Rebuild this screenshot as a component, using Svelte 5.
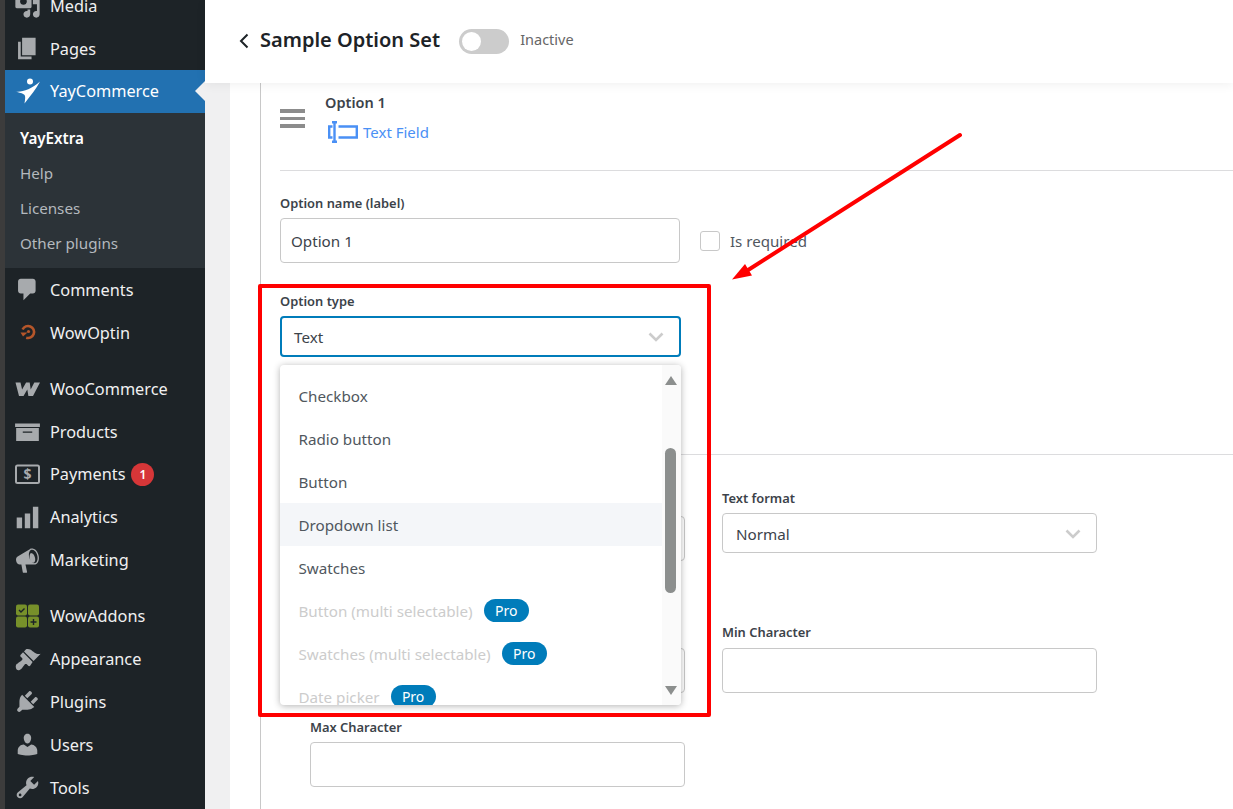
<script lang="ts">
	// dashicons-style paths, 20 unit box
	const paths = {
		media: 'M13 11V4c0-.55-.45-1-1-1h-1.67L9 1H5L3.67 3H2c-.55 0-1 .45-1 1v7c0 .55.45 1 1 1h10c.55 0 1-.45 1-1zM7 4.5c1.38 0 2.5 1.12 2.5 2.5S8.38 9.5 7 9.5 4.5 8.38 4.5 7 5.62 4.5 7 4.5zM14 6h5v10.5c0 1.38-1.12 2.5-2.5 2.5S14 17.88 14 16.5s1.12-2.5 2.5-2.5c.17 0 .34.02.5.05V9h-3V6zm-4 8.05V13h2v3.5c0 1.38-1.12 2.5-2.5 2.5S7 17.88 7 16.5 8.12 14 9.5 14c.17 0 .34.02.5.05z',
		pages: 'M6 15V2h10v13H6zm-1 1h8v2H3V5h2v11z',
		comments: 'M5 2h9c1.1 0 2 .9 2 2v7c0 1.1-.9 2-2 2h-2l-5 5v-5H5c-1.1 0-2-.9-2-2V4c0-1.1.9-2 2-2z',
		products: 'M.8 4h18.4v2.6H.8V4zM1.6 7.4h16.8V17H1.6V7.4zM6.5 10v1h7v-1h-7z',
		analytics: 'M18 18V2h-4v16h4zm-6 0V7H8v11h4zm-6 0v-8H2v8h4z',
		marketing: 'M18.15 5.94c.46 1.62.38 3.22-.02 4.48-.42 1.28-1.26 2.18-2.3 2.48-.16.06-.26.06-.4.06-.06.02-.12.02-.18.02-.06.02-.14.02-.22.02H8.5l1.2 5.5c.02.14-.06.26-.14.34-.08.1-.24.16-.34.16H6.95c-.1 0-.26-.06-.34-.16-.08-.08-.16-.2-.14-.34l-1-5.5H4.25c-.5.06-1.08-.18-1.54-.62s-.88-1.08-1.06-1.88c-.24-.8-.2-1.56-.02-2.2.18-.62.58-1.08 1.06-1.3l9-5.42c.1-.06.18-.1.24-.16.06-.04.14-.08.24-.12.16-.08.28-.12.5-.18 1.04-.3 2.24.1 3.22.98.98.84 1.82 2.24 2.26 3.86zm-2.58 5.98c.4-.1.74-.34 1.04-.7.58-.7.86-1.76.86-3.04-.02-.64-.1-1.3-.28-1.98-.34-1.36-1.02-2.5-1.78-3.24s-1.68-1.1-2.46-.88c-.82.22-1.4.96-1.7 2-.32 1.04-.28 2.36.06 3.72.38 1.36 1 2.5 1.8 3.24.78.74 1.62 1.1 2.48.88zm-2.54-7.08c.22-.04.42-.02.62.04.38.16.76.48 1.1 1s.58 1.14.76 1.84c.18.68.24 1.36.2 1.94-.04.6-.2 1.08-.48 1.42-.2.26-.44.42-.72.5-.3.08-.6.06-.88-.06-.48-.2-.92-.64-1.26-1.3-.36-.64-.6-1.4-.74-2.26-.14-.84-.12-1.6.08-2.24.2-.64.52-1.04.96-1.2.12-.02.24-.06.36-.08z',
		appearance: 'M14.48 11.06L7.41 3.99l1.5-1.5c.5-.56 2.3-.47 3.51.32 1.21.8 1.43 1.28 2.91 2.1 1.18.64 2.45 1.26 4.45.85zm-.71.71L6.7 4.7 4.93 6.47c-.39.39-.39 1.02 0 1.41l1.06 1.06c.39.39.39 1.03 0 1.42-.6.6-1.43 1.11-2.21 1.69-.35.26-.7.53-1.01.84C1.43 13.23.99 14.75 1.5 16.5c.8 2.38 3 1.36 4.04.3.31-.31.59-.66.85-1.01.58-.78 1.09-1.61 1.69-2.21.39-.39 1.02-.39 1.41 0l1.06 1.06c.39.39 1.02.39 1.41 0z',
		plugins: 'M13.11 4.36L9.87 7.6 8 5.73l3.24-3.24c.35-.34 1.05-.2 1.56.32.52.51.66 1.21.31 1.55zm-8 1.77l.91-1.12 9.01 9.01-1.19.84c-.71.71-2.63 1.16-3.82 1.16H6.14L4.9 17.26c-.59.59-1.54.59-2.12 0-.59-.58-.59-1.53 0-2.12l1.24-1.24v-3.88c0-1.13.4-3.19 1.09-3.89zm7.26 3.97l3.24-3.24c.34-.35 1.04-.21 1.55.31.52.51.66 1.21.31 1.55l-3.24 3.25z',
		users: 'M10 9.25c-2.27 0-2.73-3.44-2.73-3.44C7 4.02 7.82 2 9.97 2c2.16 0 2.98 2.02 2.71 3.81 0 0-.41 3.44-2.68 3.44zm0 2.57L12.72 10c2.39 0 4.52 2.33 4.52 4.53v2.49s-3.65 1.13-7.24 1.13c-3.65 0-7.24-1.13-7.24-1.13v-2.49c0-2.25 1.94-4.48 4.47-4.48z',
		tools: 'M16.68 9.77c-1.34 1.34-3.3 1.67-4.95.99l-5.41 6.52c-.99.99-2.59.99-3.58 0s-.99-2.59 0-3.57l6.52-5.42c-.68-1.65-.35-3.61.99-4.95 1.28-1.28 3.12-1.62 4.72-1.06l-2.89 2.89 2.82 2.82 2.86-2.87c.53 1.58.18 3.39-1.08 4.65zM3.81 16.21c.4.39 1.04.39 1.43 0 .4-.4.4-1.04 0-1.43-.39-.4-1.03-.4-1.43 0-.39.39-.39 1.03 0 1.43z'
	};

	const menuTop = [
		{ name: 'Media', icon: 'media' },
		{ name: 'Pages', icon: 'pages' }
	];
	const groups = [
		[
			{ name: 'Comments', icon: 'comments' },
			{ name: 'WowOptin', icon: 'wowoptin' }
		],
		[
			{ name: 'WooCommerce', icon: 'woo' },
			{ name: 'Products', icon: 'products' },
			{ name: 'Payments', icon: 'payments', badge: 1 },
			{ name: 'Analytics', icon: 'analytics' },
			{ name: 'Marketing', icon: 'marketing' }
		],
		[
			{ name: 'WowAddons', icon: 'addons' },
			{ name: 'Appearance', icon: 'appearance' },
			{ name: 'Plugins', icon: 'plugins' },
			{ name: 'Users', icon: 'users' },
			{ name: 'Tools', icon: 'tools' }
		]
	];
	const submenu = ['YayExtra', 'Help', 'Licenses', 'Other plugins'];

	const optionTypes = [
		{ label: 'Checkbox' },
		{ label: 'Radio button' },
		{ label: 'Button' },
		{ label: 'Dropdown list', hover: true },
		{ label: 'Swatches' },
		{ label: 'Button (multi selectable)', pro: true },
		{ label: 'Swatches (multi selectable)', pro: true },
		{ label: 'Date picker', pro: true }
	];
</script>

{#snippet menuItem(item)}
	<a class="menu-item" href="#top">
		{#if item.icon === 'woo'}
			<svg class="icon" viewBox="0 0 27 27">
				<path d="M1.5 7.5h5l1.6 7 4-7h3.6l1 7 3.6-7h5.7l-7 13.5h-4.6l-1.1-6.5-3.8 6.5H5z" fill="#a7aaad" />
			</svg>
		{:else if item.icon === 'wowoptin'}
			<svg class="icon" viewBox="0 0 27 27">
				<path d="M8.6 10.5a6 6 0 1 1 3.6 8.2" fill="none" stroke="#b5562a" stroke-width="2.6" />
				<path d="M6.5 13.5h7l-4.5 4z" fill="#b5562a" />
				<circle cx="14.5" cy="12.5" r="1.6" fill="#b5562a" />
			</svg>
		{:else if item.icon === 'payments'}
			<svg class="icon" viewBox="0 0 27 27">
				<rect x="2" y="4.5" width="23" height="17.5" rx="1.5" fill="none" stroke="#a7aaad" stroke-width="2" />
				<text x="13.5" y="18" text-anchor="middle" class="dollar">$</text>
			</svg>
		{:else if item.icon === 'addons'}
			<svg class="icon" viewBox="0 0 27 27">
				<rect x="2" y="1.5" width="11" height="11" rx="2" fill="#77902a" />
				<rect x="14" y="1.5" width="11" height="11" rx="2" fill="#77902a" />
				<rect x="2" y="13.5" width="11" height="11" rx="2" fill="#77902a" />
				<rect x="14" y="13.5" width="11" height="11" rx="2" fill="#77902a" />
				<path d="M5 7l2 2 3.5-3.5" fill="none" stroke="#1d2327" stroke-width="1.4" />
				<path d="M19.5 16v6M16.5 19h6" stroke="#1d2327" stroke-width="1.4" />
			</svg>
		{:else}
			<svg class="icon" viewBox="0 0 20 20"><path d={paths[item.icon]} fill="#a7aaad" /></svg>
		{/if}
		<span>{item.name}</span>
		{#if item.badge}<b class="count">{item.badge}</b>{/if}
	</a>
{/snippet}

{#snippet chevron()}
	<svg class="chevron" viewBox="0 0 16 10">
		<path d="M1.5 1.5L8 8l6.5-6.5" fill="none" stroke="#cccccc" stroke-width="2.6" />
	</svg>
{/snippet}

<div class="app" id="top">
	<aside class="sidebar">
		<nav class="menu">
			{#each menuTop as item}
				{@render menuItem(item)}
			{/each}
			<a class="menu-item active" href="#top">
				<svg class="icon" viewBox="0 0 27 27">
					<circle cx="16" cy="3.4" r="3" fill="#fff" />
					<path d="M1 13.5C8 14.5 17 11.5 26 3.5 22 11 17 17 10.5 25.5 11.5 20 11.5 17.5 10 16.5 7 14.5 4 14.5 1 13.5z" fill="#fff" />
				</svg>
				<span>YayCommerce</span>
			</a>
			<ul class="submenu">
				{#each submenu as sub, i}
					<li class:current={i === 0}>{sub}</li>
				{/each}
			</ul>
			{#each groups as group}
				<div class="menu-group">
					{#each group as item}
						{@render menuItem(item)}
					{/each}
				</div>
			{/each}
		</nav>
	</aside>

	<main class="main">
		<header class="topbar">
			<svg class="back" viewBox="0 0 10 16">
				<path d="M8.5 1.5L2 8l6.5 6.5" fill="none" stroke="#1d2327" stroke-width="2" />
			</svg>
			<h1>Sample Option Set</h1>
			<span class="toggle"><i></i></span>
			<span class="toggle-label">Inactive</span>
		</header>

		<div class="page">
			<div class="panel">
				<section class="card">
					<div class="option-head">
						<div class="burger"><i></i><i></i><i></i></div>
						<div class="option-title">
							<strong>Option 1</strong>
							<div class="option-kind">
								<svg viewBox="0 0 30 22" class="field-icon">
									<path d="M4 1.2h5M4 20.8h5M6.5 1.2v19.6M4.5 5.5H1.2v11h3.3M10.5 5.5h18.3v11H10.5" fill="none" stroke="#4a90f5" stroke-width="2.4" />
								</svg>
								<span>Text Field</span>
							</div>
						</div>
					</div>

					<div class="name-row">
						<div class="field">
							<span class="label">Option name (label)</span>
							<div class="input">Option 1</div>
						</div>
						<label class="required"><i></i><span>Is required</span></label>
					</div>

					<div class="type-field">
						<span class="label">Option type</span>
						<div class="select focus">Text {@render chevron()}</div>
						<div class="dropdown">
							<ul>
								{#each optionTypes as opt}
									<li class:hover={opt.hover} class:disabled={opt.pro}>
										<span>{opt.label}</span>
										{#if opt.pro}<em>Pro</em>{/if}
									</li>
								{/each}
							</ul>
							<div class="scroll">
								<i class="up"></i>
								<i class="thumb"></i>
								<i class="down"></i>
							</div>
						</div>
					</div>

					<div class="settings">
						<div class="col left">
							<div class="input"></div>
							<div class="input second"></div>
							<span class="label max">Max Character</span>
							<div class="input"></div>
						</div>
						<div class="col right">
							<span class="label">Text format</span>
							<div class="select">Normal {@render chevron()}</div>
							<span class="label min">Min Character</span>
							<div class="input"></div>
						</div>
					</div>
				</section>
			</div>
		</div>
	</main>

	<!-- red annotation drawn over the screenshot -->
	<div class="mark-box"></div>
	<svg class="mark-arrow" viewBox="0 0 1233 809">
		<path d="M960 135L745 272" stroke="#ff0000" stroke-width="4" stroke-linecap="round" fill="none" />
		<path d="M732 279.5L745 264 752 275.5z" fill="#ff0000" />
	</svg>
</div>

<style>
	:global(body) {
		margin: 0;
		background: #ffffff;
	}

	.app {
		position: relative;
		display: flex;
		height: 809px;
		overflow: hidden;
		font-family: 'Noto Sans', 'Open Sans', sans-serif;
		color: #3c434a;
	}

	/* wp admin menu */
	.sidebar {
		width: 200px;
		flex: none;
		background: #1d2327;
		border-left: 5px solid #3c3c3c;
	}

	.menu {
		margin-top: -15.6px;
	}

	.menu-item {
		display: flex;
		align-items: center;
		height: 42.8px;
		padding-left: 9px;
		box-sizing: border-box;
		color: #f0f0f1;
		font-size: 16.3px;
		text-decoration: none;
		position: relative;
	}

	.menu-item > span {
		margin-left: 9px;
	}

	.icon {
		width: 27px;
		height: 27px;
		flex: none;
	}

	.dollar {
		font-family: 'Noto Sans', sans-serif;
		font-size: 14px;
		font-weight: 700;
		fill: #a7aaad;
	}

	.active {
		background: #2271b1;
		color: #ffffff;
	}

	.active::after {
		content: '';
		position: absolute;
		right: 0;
		top: 50%;
		margin-top: -10px;
		border: 10px solid transparent;
		border-left-width: 0;
		border-right-color: #f0f0f1;
	}

	.count {
		margin-left: 6px;
		width: 23px;
		height: 23px;
		border-radius: 50%;
		background: #d63638;
		color: #ffffff;
		font-size: 12px;
		font-weight: 600;
		text-align: center;
		line-height: 23px;
	}

	.submenu {
		list-style: none;
		margin: 0;
		padding: 8.5px 0 7.1px 15px;
		background: #2c3338;
		color: #b4b9be;
		font-size: 15.2px;
	}

	.submenu li {
		height: 35px;
		line-height: 35px;
	}

	.submenu .current {
		color: #ffffff;
		font-weight: 600;
	}

	.menu-group + .menu-group {
		margin-top: 13.5px;
	}

	/* main area */
	.main {
		flex: 1;
		min-width: 0;
		display: flex;
		flex-direction: column;
		background: #f0f0f1;
	}

	.topbar {
		position: relative;
		z-index: 1;
		height: 83px;
		flex: none;
		box-sizing: border-box;
		display: flex;
		align-items: center;
		padding-left: 34px;
		background: #ffffff;
		box-shadow: 0 2px 10px rgba(0, 0, 0, 0.06);
	}

	.back {
		width: 10px;
		height: 16px;
		margin-bottom: 2px;
	}

	h1 {
		margin: 0 0 4px 11px;
		font-size: 20px;
		font-weight: 600;
		color: #1d2327;
	}

	.toggle {
		margin-left: 19px;
		width: 50px;
		height: 25px;
		border-radius: 13px;
		background: #cccccc;
		position: relative;
	}

	.toggle i {
		position: absolute;
		left: 3px;
		top: 3px;
		width: 19px;
		height: 19px;
		border-radius: 50%;
		background: #ffffff;
	}

	.toggle-label {
		margin: 0 0 6px 11px;
		font-size: 14.5px;
		color: #666666;
	}

	.page {
		flex: 1;
		padding-left: 25px;
		min-height: 0;
	}

	.panel {
		height: 100%;
		padding-left: 30px;
		background: #ffffff;
	}

	.card {
		height: 100%;
		padding-left: 19px;
		border-left: 1px solid #c8c8c8;
	}

	.option-head {
		display: flex;
		height: 88px;
		box-sizing: border-box;
		border-bottom: 1px solid #dcdcde;
	}

	.burger {
		width: 25px;
		margin-top: 26px;
		display: flex;
		flex-direction: column;
		gap: 4px;
	}

	.burger i {
		height: 3.7px;
		background: #8c8c8c;
	}

	.option-title {
		margin-left: 20px;
		padding-top: 10px;
	}

	.option-title strong {
		display: block;
		font-size: 14.5px;
		font-weight: 600;
		line-height: 19px;
		color: #3c434a;
	}

	.option-kind {
		display: flex;
		align-items: center;
		margin: 9px 0 0 3px;
		font-size: 15px;
		color: #4a90f5;
	}

	.field-icon {
		width: 30px;
		height: 22px;
		margin-right: 5px;
	}

	.label {
		display: block;
		font-size: 12.9px;
		font-weight: 600;
		line-height: 16px;
		color: #3c434a;
	}

	.name-row {
		display: flex;
		align-items: flex-end;
		padding-top: 24px;
	}

	.name-row .field {
		width: 400px;
	}

	.input,
	.select {
		box-sizing: border-box;
		height: 45px;
		border: 1px solid #c8c8c8;
		border-radius: 4px;
		background: #ffffff;
		font-size: 15.2px;
		color: #3c434a;
		display: flex;
		align-items: center;
		padding-left: 10px;
	}

	.name-row .input {
		margin-top: 7px;
	}

	.required {
		display: flex;
		align-items: center;
		margin: 0 0 12px 20px;
		font-size: 15.1px;
		color: #50575e;
	}

	.required i {
		width: 20px;
		height: 20px;
		box-sizing: border-box;
		border: 1px solid #c8c8c8;
		border-radius: 3px;
		margin-right: 10px;
	}

	.type-field {
		position: relative;
		width: 401px;
		margin-top: 30px;
		height: 161px;
	}

	.type-field .label {
		margin-bottom: 7px;
	}

	.select {
		justify-content: space-between;
		padding: 0 15px 0 13px;
		height: 40px;
	}

	.select.focus {
		height: 41px;
		border: 2px solid #007cba;
		padding-left: 12px;
	}

	.right .select {
		padding-top: 1px;
	}

	.chevron {
		width: 16px;
		height: 10px;
	}

	.dropdown {
		position: absolute;
		left: 0;
		top: 72px;
		z-index: 3;
		width: 401px;
		height: 340px;
		box-sizing: border-box;
		display: flex;
		overflow: hidden;
		background: #ffffff;
		border-radius: 4px;
		box-shadow: 0 1px 7px rgba(0, 0, 0, 0.3);
	}

	.dropdown ul {
		flex: 1;
		list-style: none;
		margin: 0;
		padding: 9px 0 0;
		font-size: 15.2px;
		color: #50575e;
	}

	.dropdown li {
		height: 43px;
		display: flex;
		align-items: center;
		padding-left: 18.5px;
	}

	.dropdown .hover {
		background: #f4f6f9;
	}

	.dropdown .disabled {
		color: #cccccc;
	}

	.dropdown em {
		margin-left: 11px;
		width: 45px;
		height: 23px;
		border-radius: 12px;
		background: #007cba;
		color: #ffffff;
		font-style: normal;
		font-size: 14px;
		line-height: 23px;
		text-align: center;
	}

	.scroll {
		position: relative;
		width: 19px;
		flex: none;
		background: #fafafa;
	}

	.scroll .thumb {
		position: absolute;
		left: 3px;
		top: 83px;
		width: 11px;
		height: 145px;
		border-radius: 6px;
		background: #8c8f8e;
	}

	.scroll .up,
	.scroll .down {
		position: absolute;
		left: 3px;
		border-left: 6.5px solid transparent;
		border-right: 6.5px solid transparent;
	}

	.scroll .up {
		top: 11px;
		border-bottom: 9px solid #8c8f8e;
	}

	.scroll .down {
		bottom: 10px;
		border-top: 9px solid #8c8f8e;
	}

	.settings {
		display: flex;
		gap: 37px;
		margin-right: -200px;
		padding-left: 30px;
		border-top: 1px solid #dcdcde;
	}

	.col {
		width: 375px;
		flex: none;
	}

	.left {
		padding-top: 61px;
	}

	.left .second {
		margin-top: 87px;
	}

	.left .max {
		margin: 26px 0 7px;
	}

	.right {
		padding-top: 35px;
	}

	.right > .label:first-child {
		margin-bottom: 7px;
	}

	.right .min {
		margin: 71px 0 8px;
	}

	.mark-box {
		position: absolute;
		left: 258px;
		top: 284px;
		width: 453px;
		height: 433px;
		box-sizing: border-box;
		border: 4px solid #ff0000;
		border-radius: 2px;
		z-index: 5;
	}

	.mark-arrow {
		position: absolute;
		left: 0;
		top: 0;
		width: 1233px;
		height: 809px;
		z-index: 5;
		pointer-events: none;
	}
</style>
